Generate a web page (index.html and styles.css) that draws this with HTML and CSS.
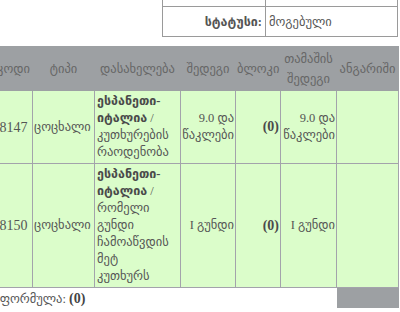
FILE: index.html
```html
<!DOCTYPE html>
<html lang="ka">
<head>
<meta charset="utf-8">
<link rel="stylesheet" href="styles.css">
</head>
<body>
<div class="page">
  <table class="info">
    <tr><th class="info-label">თარიღი:</th><td class="info-value">2014-06-20</td></tr>
    <tr><th class="info-label">სტატუსი:</th><td class="info-value">მოგებული</td></tr>
  </table>

  <table class="bets">
    <colgroup>
      <col class="c1"><col class="c2"><col class="c3"><col class="c4"><col class="c5"><col class="c6"><col class="c7">
    </colgroup>
    <thead>
      <tr>
        <th>კოდი</th>
        <th>ტიპი</th>
        <th>დასახელება</th>
        <th>შედეგი</th>
        <th>ბლოკი</th>
        <th>თამაშის შედეგი</th>
        <th>ანგარიში</th>
      </tr>
    </thead>
    <tbody>
      <tr>
        <td class="code">8147</td>
        <td>ცოცხალი</td>
        <td class="name"><b>ესპანეთი-იტალია</b> / კუთხურების რაოდენობა</td>
        <td class="num">9.0 და წაკლები</td>
        <td class="num"><b>(0)</b></td>
        <td class="num">9.0 და წაკლები</td>
        <td></td>
      </tr>
      <tr>
        <td class="code">8150</td>
        <td>ცოცხალი</td>
        <td class="name"><b>ესპანეთი-იტალია</b> / რომელი გუნდი ჩამოაწვდის მეტ კუთხურს</td>
        <td class="num">I გუნდი</td>
        <td class="num"><b>(0)</b></td>
        <td class="num">I გუნდი</td>
        <td></td>
      </tr>
    </tbody>
    <tfoot>
      <tr>
        <td colspan="6" class="total">კოეფიციენტის ფორმულა: <b>(0)</b></td>
        <td class="total-gray"></td>
      </tr>
    </tfoot>
  </table>
</div>
</body>
</html>
```

FILE: styles.css
```css
html, body {
  margin: 0;
  padding: 0;
  background: #ffffff;
  overflow: hidden;
}

body {
  font-family: "Liberation Serif", "DejaVu Sans", serif;
  font-size: 12.5px;
  line-height: 18px;
  color: #555555;
}

.page {
  width: 404px;
  margin: -24px 0 0 -6px;
  display: flex;
  flex-direction: column;
  align-items: stretch;
}

.info {
  align-self: flex-end;
  width: 236px;
  border-collapse: collapse;
  margin-bottom: 9px;
}

.info th,
.info td {
  border: 1px solid #9a9a9a;
  height: 30px;
  padding: 0 3px;
  box-sizing: border-box;
}

.info-label {
  width: 103px;
  text-align: right;
  font-weight: bold;
  color: #555555;
}

.info-value {
  text-align: left;
  font-weight: normal;
}

.bets {
  width: 404px;
  table-layout: fixed;
  border-collapse: collapse;
}

.c1 { width: 38px; }
.c2 { width: 62px; }
.c3 { width: 86px; }
.c4 { width: 55px; }
.c5 { width: 45px; }
.c6 { width: 56px; }
.c7 { width: 62px; }

.bets thead th {
  background: #9da0a3;
  border: 1px solid #9da0a3;
  color: #666666;
  font-weight: normal;
  text-align: center;
  height: 44px;
  padding: 0 1px;
  line-height: 20px;
  box-sizing: border-box;
}

.bets tbody td {
  background: #dbfdca;
  border: 1px solid #a3a3ab;
  padding: 2px 1px;
  vertical-align: middle;
  text-align: left;
  line-height: 17px;
}

.bets tbody td.name {
  padding-left: 2px;
  padding-right: 7px;
}

.bets tbody td b {
  color: #4a4a4a;
}

.bets .code {
  text-align: center;
  font-size: 14px;
}

.bets .num {
  text-align: right;
}

.bets .num b {
  font-size: 14px;
}

.bets .total {
  background: #ffffff;
  border: none;
  padding: 2px 0 0 0;
  text-align: left;
  white-space: nowrap;
  overflow: hidden;
  text-indent: -85px;
}

.bets .total b {
  font-size: 14px;
  color: #444444;
}

.bets .total-gray {
  background: #9da0a3;
  border: none;
}
```
